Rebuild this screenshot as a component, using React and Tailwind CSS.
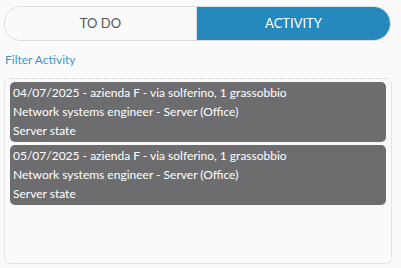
export default function App() {
  const items = ["04/07/2025", "05/07/2025"];
  return (
    <div className="w-[401px] h-[268px] bg-[#fafafa] px-[4px] pt-[6px] overflow-hidden" style={{ fontFamily: "Lato, 'Open Sans', sans-serif" }}>
      <div className="flex w-[387px] h-[35px] rounded-full border border-[#dcdcdc] overflow-hidden">
        <div className="flex-1 flex items-center justify-center text-[13px] text-[#555] bg-[#fafafa] border-r border-[#dcdcdc]">TO DO</div>
        <div className="w-[193px] flex items-center justify-center text-[13px] text-white bg-[#2589bd]">ACTIVITY</div>
      </div>
      <div className="mt-[11px] ml-[1px] text-[12px] text-[#3f95c9] leading-[16px]">Filter Activity</div>
      <div className="mt-[10px] w-[388px] h-[186px] rounded-[6px] border border-dotted border-[#cfcfcf] px-[5px] pt-[3px] flex flex-col gap-[3px]">
        {items.map((d) => (
          <div key={d} className="h-[60px] bg-[#6d6d6f] rounded-[5px] text-white text-[12px] leading-[19px] px-[3px] pt-[1px]">
            <div>{d} - azienda F - via solferino, 1 grassobbio</div>
            <div>Network systems engineer - Server (Office)</div>
            <div>Server state</div>
          </div>
        ))}
      </div>
    </div>
  );
}
